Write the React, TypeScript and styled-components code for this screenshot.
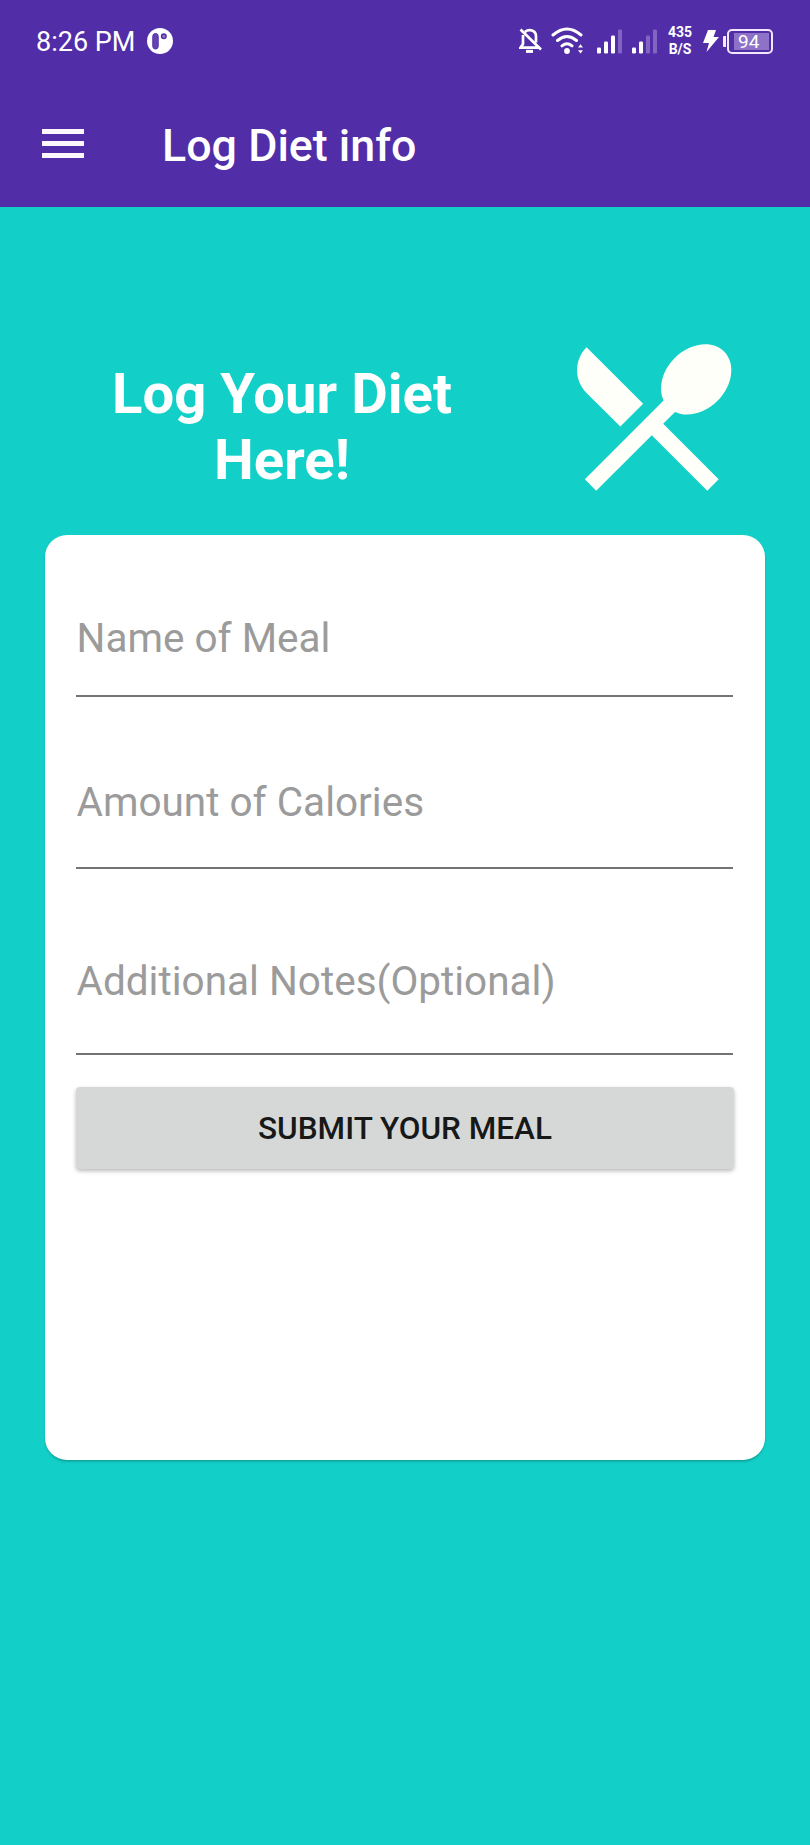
import React from 'react';
import styled, { createGlobalStyle } from 'styled-components';

const Global = createGlobalStyle`
  * { box-sizing: border-box; }
  body { margin: 0; background: #12d0c8; font-family: Roboto, "Liberation Sans", sans-serif; }
`;

const Screen = styled.div`
  width: 810px;
  height: 1845px;
  background: #12d0c8;
  display: flex;
  flex-direction: column;
`;

const Header = styled.header`
  height: 207px;
  background: #512da8;
  color: #fff;
`;

const StatusBar = styled.div`
  height: 82px;
  display: flex;
  align-items: center;
  justify-content: space-between;
  padding: 0 37px 0 36px;
`;

const StatusGroup = styled.div`
  display: flex;
  align-items: center;
`;

const Clock = styled.span`
  font-size: 27px;
  line-height: 32px;
  margin: 2px 12px 0 0;
`;

const Icon = styled.svg<{ $gap?: number }>`
  display: block;
  flex: none;
  margin-left: ${(p) => p.$gap ?? 0}px;
`;

const NetSpeed = styled.div`
  width: 26px;
  margin: 0 0 0 10px;
  font-size: 14px;
  font-weight: 700;
  line-height: 17px;
  text-align: center;
`;

const Battery = styled.div`
  display: flex;
  align-items: center;
  margin-left: 4px;
`;

const BatteryTip = styled.div`
  width: 3px;
  height: 11px;
  margin-right: 1px;
  border-radius: 1px 0 0 1px;
  background: #f3ecff;
`;

const BatteryBody = styled.div`
  width: 46px;
  height: 25px;
  padding: 2px 2px 2px 5px;
  border: 2px solid #f3e6ff;
  border-radius: 5px;
`;

const BatteryLevel = styled.div`
  height: 17px;
  padding-left: 4px;
  background: #8d72c8;
  font-size: 19px;
  line-height: 17px;
`;

const Toolbar = styled.div`
  height: 125px;
  display: flex;
  align-items: center;
  padding: 0 42px;
`;

const MenuButton = styled.button`
  display: flex;
  flex-direction: column;
  gap: 7px;
  width: 42px;
  padding: 0;
  margin: 0 78px 3px 0;
  border: 0;
  background: none;
`;

const MenuBar = styled.span`
  height: 5px;
  background: #fdf8ff;
`;

const ToolbarTitle = styled.h1`
  margin: 1px 0 0;
  font-size: 44.8px;
  font-weight: 500;
  line-height: 53px;
`;

const Hero = styled.section`
  height: 328px;
  display: flex;
  align-items: flex-start;
  padding: 112px 60px 0 82px;
`;

const HeroTitle = styled.h2`
  width: 400px;
  margin: 42px 73px 0 0;
  color: #fff;
  font-size: 56.25px;
  font-weight: 700;
  line-height: 66px;
  text-align: center;
`;

const Card = styled.form`
  height: 925px;
  margin: 0 45px;
  padding: 0 31px;
  border-radius: 22px;
  background: #fff;
  box-shadow: 0 2px 3px -1px rgba(0, 60, 60, 0.45);
`;

const Field = styled.input<{ $height: number; $drop: number }>`
  display: block;
  width: 657px;
  height: ${(p) => p.$height}px;
  padding: ${(p) => p.$drop}px 0 0 0.5px;
  border: 0;
  border-bottom: 2px solid #747474;
  border-radius: 0;
  outline: none;
  background: none;
  font-family: inherit;
  font-size: 40.5px;
  line-height: 48px;
  &::placeholder { color: #9b9b9b; opacity: 1; }
`;

const SubmitButton = styled.button`
  display: block;
  width: 658px;
  height: 82px;
  margin: 32px 0 0;
  padding: 0;
  border: 0;
  border-radius: 4px;
  background: #d6d8d7;
  box-shadow: 0 2px 4px rgba(0, 0, 0, 0.28);
  color: #171918;
  font-family: inherit;
  font-size: 31.5px;
  font-weight: 500;
`;

function AppBadge() {
  return (
    <Icon width="26" height="26" viewBox="0 0 26 26">
      <circle cx="13" cy="13" r="13" fill="#fff" />
      <rect x="5.8" y="5.5" width="5.4" height="15.5" rx="2.7" fill="#6443b2" stroke="#512da8" strokeWidth="1" />
      <circle cx="16.8" cy="8.3" r="2.3" fill="#8c72c8" stroke="#512da8" strokeWidth="1.4" />
    </Icon>
  );
}

function BellOff() {
  return (
    <Icon width="24" height="26" viewBox="0 0 24 26" fill="none" stroke="#fff" strokeWidth="2.7">
      <path d="M6 3.8C10 .8 17 2 17 8.5v6M4 7v9l-2.4 3.6h17.5M1.5 1.5l20.5 20" />
      <path d="M7 23.4h7" strokeWidth="3" />
    </Icon>
  );
}

function Wifi() {
  return (
    <Icon $gap={8} width="33" height="28" viewBox="0 0 33 28" fill="none" stroke="#fff" strokeWidth="3" strokeLinecap="round">
      <path d="M2 8q14-12 28 0M6.5 13.5q9.5-8 19 0M11 18.8q5-4 10 0" />
      <circle cx="16" cy="24" r="2.9" fill="#fff" stroke="none" />
      <path d="M27 20.5l2.5-3.2 2.5 3.2zM27 23.3l2.5 3.2 2.5-3.2z" fill="#fff" stroke="none" />
    </Icon>
  );
}

function Signal({ bars, gap }: { bars: number; gap: number }) {
  return (
    <Icon $gap={gap} width="25" height="25" viewBox="0 0 25 25">
      {[6, 12, 18, 24].map((h, i) => (
        <rect key={h} x={i * 7} y={24.5 - h} width="4" height={h} rx="1.3" fill={i < bars ? '#fff' : '#8264c2'} />
      ))}
    </Icon>
  );
}

function Bolt() {
  return (
    <Icon $gap={10} width="16" height="22" viewBox="0 0 16 22" fill="#fff">
      <path d="M5 0h8l-2.5 7H16L3.5 22 6 13H0z" />
    </Icon>
  );
}

function Cutlery() {
  return (
    <Icon width="193.6" height="193.6" viewBox="0 0 24 24" fill="#fffffa">
      <path d="M8.1 13.34l2.83-2.83L3.91 3.5c-1.56 1.56-1.56 4.09 0 5.66l4.19 4.18zm6.78-1.81c1.53.71 3.68.21 5.27-1.38 1.91-1.91 2.28-4.65.81-6.12-1.46-1.46-4.2-1.1-6.12.81-1.59 1.59-2.09 3.74-1.38 5.27L3.7 19.87l1.41 1.41L12 14.41l6.88 6.88 1.41-1.41L13.41 13l1.47-1.47z" />
    </Icon>
  );
}

export default function App() {
  return (
    <Screen>
      <Global />
      <Header>
        <StatusBar>
          <StatusGroup>
            <Clock>8:26 PM</Clock>
            <AppBadge />
          </StatusGroup>
          <StatusGroup>
            <BellOff />
            <Wifi />
            <Signal bars={3} gap={13} />
            <Signal bars={2} gap={10} />
            <NetSpeed>435 B/S</NetSpeed>
            <Bolt />
            <Battery>
              <BatteryTip />
              <BatteryBody>
                <BatteryLevel>94</BatteryLevel>
              </BatteryBody>
            </Battery>
          </StatusGroup>
        </StatusBar>
        <Toolbar>
          <MenuButton type="button" aria-label="Menu">
            <MenuBar />
            <MenuBar />
            <MenuBar />
          </MenuButton>
          <ToolbarTitle>Log Diet info</ToolbarTitle>
        </Toolbar>
      </Header>
      <Hero>
        <HeroTitle>Log Your Diet Here!</HeroTitle>
        <Cutlery />
      </Hero>
      <Card>
        <Field $height={162} $drop={45} placeholder="Name of Meal" />
        <Field $height={172} $drop={39} placeholder="Amount of Calories" />
        <Field $height={186} $drop={39} placeholder="Additional Notes(Optional)" />
        <SubmitButton type="button">SUBMIT YOUR MEAL</SubmitButton>
      </Card>
    </Screen>
  );
}
